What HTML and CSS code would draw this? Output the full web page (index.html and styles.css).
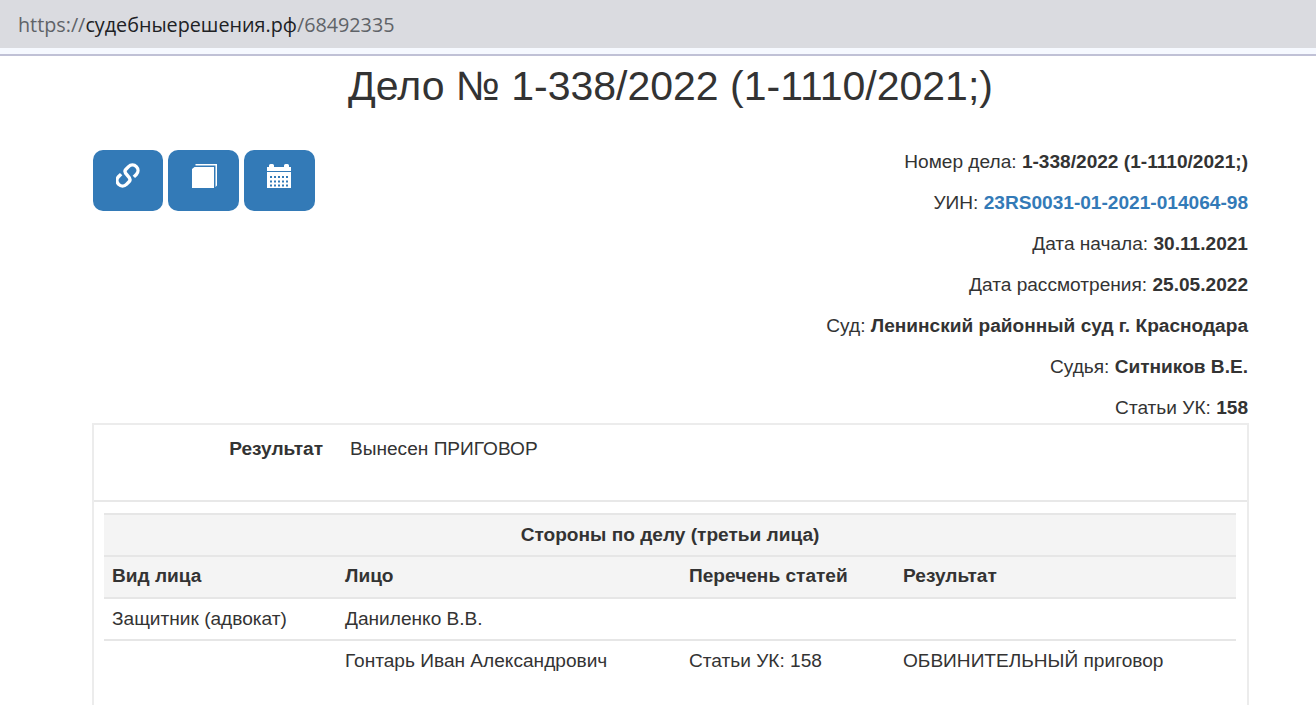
FILE: index.html
```html
<!DOCTYPE html>
<html lang="ru">
<head>
<meta charset="utf-8">
<title>Дело № 1-338/2022</title>
<link rel="stylesheet" href="styles.css">
</head>
<body>
<div class="addressbar"><span class="dim">https://</span><span class="host">судебныерешения.рф</span><span class="dim">/68492335</span></div>
<main class="container">
  <h1 class="title">Дело № 1-338/2022 (1-1110/2021;)</h1>
  <div class="summary">
    <div class="buttons">
      <a class="btn btn-a" href="#" aria-label="Ссылка">
        <svg class="icon" width="26" height="26" viewBox="0 0 26 26"><g transform="translate(-0.500 -0.500) rotate(-45 12 13)" fill="none" stroke="#fff" stroke-width="3.400" stroke-linecap="butt" stroke-linejoin="round"><path d="M8.500 7.500H5a5.500 5.500 0 0 0 0 11H9Q12 18.500 12 13Q12 7.500 15 7.500H19a5.500 5.500 0 0 1 0 11H15.500"/></g></svg>
      </a>
      <a class="btn btn-b" href="#" aria-label="Книга">
        <svg class="icon" width="26" height="26" viewBox="0 0 26 26"><path fill="#fff" d="M4.500 1H26V22.500L24.500 24V2.500H4.500z"/><path fill="#fff" d="M1 6 3.500 4H23V25H1z"/></svg>
      </a>
      <a class="btn btn-c" href="#" aria-label="Календарь">
        <svg class="icon" width="26" height="26" viewBox="0 0 26 26"><path fill="#fff" d="M0 4H2V2.500Q2 1 3.500 1H5.500Q7 1 7 2.500V4H17V2.500Q17 1 18.500 1H20.500Q22 1 22 2.500V4H24V8H0z"/><path fill="#fff" fill-rule="evenodd" d="M0 9H24V25H0zM3 13v2h2v-2zM7 13v2h2v-2zM11 13v2h2v-2zM15 13v2h2v-2zM19 13v2h2v-2zM3 17.500v2h2v-2zM7 17.500v2h2v-2zM11 17.500v2h2v-2zM15 17.500v2h2v-2zM19 17.500v2h2v-2zM3 21.500v2h2v-2zM7 21.500v2h2v-2zM11 21.500v2h2v-2zM15 21.500v2h2v-2zM19 21.500v2h2v-2z"/></svg>
      </a>
    </div>
    <div class="facts">
      <p>Номер дела: <b>1-338/2022 (1-1110/2021;)</b></p>
      <p>УИН: <a class="uin" href="#">23RS0031-01-2021-014064-98</a></p>
      <p>Дата начала: <b>30.11.2021</b></p>
      <p>Дата рассмотрения: <b>25.05.2022</b></p>
      <p>Суд: <b>Ленинский районный суд г. Краснодара</b></p>
      <p>Судья: <b>Ситников В.Е.</b></p>
      <p>Статьи УК: <b>158</b></p>
    </div>
  </div>
  <section class="panel">
    <div class="result">
      <div class="result-label">Результат</div>
      <div class="result-value">Вынесен ПРИГОВОР</div>
    </div>
    <div class="panel-body">
      <table class="parties">
        <colgroup><col class="c1"><col class="c2"><col class="c3"><col class="c4"></colgroup>
        <thead>
          <tr><th colspan="4" class="caption">Стороны по делу (третьи лица)</th></tr>
          <tr class="heads"><th>Вид лица</th><th>Лицо</th><th>Перечень статей</th><th>Результат</th></tr>
        </thead>
        <tbody>
          <tr><td>Защитник (адвокат)</td><td>Даниленко В.В.</td><td></td><td></td></tr>
          <tr><td></td><td>Гонтарь Иван Александрович</td><td>Статьи УК: 158</td><td>ОБВИНИТЕЛЬНЫЙ приговор</td></tr>
        </tbody>
      </table>
    </div>
  </section>
</main>
</body>
</html>
```
FILE: styles.css
```css
* { box-sizing: border-box; }
html, body { height: 705px; overflow: hidden; }
body {
  margin: 0;
  background: #fff;
  color: #333;
  font-family: "Liberation Sans", Arial, sans-serif;
  font-size: 19.100px;
  line-height: 25px;
}
.addressbar {
  height: 56px;
  padding: 12px 0 0 18px;
  background: linear-gradient(#dadbe0 48px, #f6f9ff 48px, #f6f9ff 54px, #c0c1d6 54px);
  font-family: "Open Sans", sans-serif;
  font-size: 19.750px;
  line-height: 26px;
}
.dim { color: #5f6368; }
.host { color: #202124; }
.container { margin: 0 68px 0 93px; }
.title {
  margin: 0;
  padding-top: 5px;
  height: 94px;
  font-size: 41px;
  font-weight: 400;
  line-height: 50px;
  text-align: center;
}
.summary { display: flex; justify-content: space-between; }
.buttons { display: flex; gap: 5px; align-items: flex-start; }
.btn {
  display: flex;
  align-items: center;
  height: 61px;
  padding: 0 0 9px 23px;
  background: #337ab7;
  border-radius: 10px;
}
.btn-a { width: 70px; }
.btn-b { width: 71px; }
.btn-c { width: 71px; }
.facts { margin-top: -1px; text-align: right; }
.facts p { margin: 0 0 16px; }
.facts p:last-child { margin-bottom: 3px; }
.uin { color: #337ab7; font-weight: 700; text-decoration: none; }
.panel {
  height: 291px;
  margin: 0 -1px;
  border: 2px solid #ececec;
  border-bottom: 0;
}
.result {
  display: flex;
  height: 77px;
  padding-top: 11px;
  border-bottom: 2px solid #e8e8e8;
}
.result-label { width: 229px; text-align: right; font-weight: 700; }
.result-value { margin-left: 27px; }
.panel-body { padding: 11px 11px 0 10px; }
.parties { width: 100%; border-collapse: collapse; table-layout: fixed; }
.c1 { width: 233px; }
.c2 { width: 344px; }
.c3 { width: 214px; }
.parties th, .parties td {
  height: 42px;
  padding: 0 8px 2px;
  text-align: left;
  vertical-align: middle;
  border-top: 2px solid #e6e6e6;
}
.parties th { background: #f4f4f4; font-weight: 700; }
.parties th.caption { text-align: center; }
.parties .heads th { padding-bottom: 4px; border-bottom: 2px solid #e6e6e6; }
```
